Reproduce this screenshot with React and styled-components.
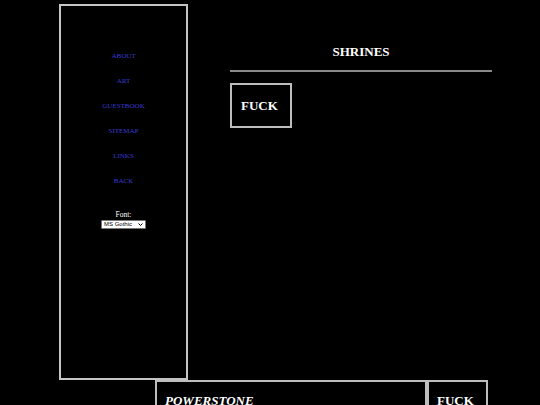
import React from "react";
import styled, { createGlobalStyle } from "styled-components";

const Global = createGlobalStyle`
  html, body { margin: 0; padding: 0; background: #000; overflow: hidden; }
  body { font-family: "Liberation Serif", "Times New Roman", serif; color: #fff; }
`;

const Page = styled.div`
  padding: 4px 0 0 59px;
  width: 540px;
  box-sizing: border-box;
`;

const TopRow = styled.div`
  display: flex;
  align-items: flex-start;
`;

const Sidebar = styled.nav`
  box-sizing: border-box;
  width: 129px;
  height: 376px;
  border: 2px solid #c4c4c4;
  display: flex;
  flex-direction: column;
  align-items: center;
  padding-top: 38px;
`;

const NavLink = styled.a`
  display: block;
  height: 25px;
  line-height: 25px;
  font-size: 7px;
  color: #3a3ad2;
  text-decoration: none;
  text-transform: uppercase;
`;

const FontLabel = styled.div`
  margin-top: 17px;
  font-size: 7.5px;
  line-height: 8px;
  color: #fff;
`;

const SelectWrap = styled.div`
  position: relative;
  width: 45px;
  height: 9px;
  margin-top: 1px;
  line-height: 0;
`;

const FontSelect = styled.select`
  display: block;
  appearance: none;
  -webkit-appearance: none;
  box-sizing: border-box;
  width: 45px;
  height: 9px;
  font-size: 6px;
  line-height: 7px;
  padding: 0 0 0 2px;
  margin: 0;
  border: 1px solid #777;
  border-radius: 1px;
  background: #fff;
  color: #000;
  font-family: "Liberation Sans", Arial, sans-serif;
`;

const Chevron = styled.svg`
  position: absolute;
  right: 3px;
  top: 3px;
  width: 5px;
  height: 3px;
  pointer-events: none;
`;

const Main = styled.main`
  margin-left: 42px;
  width: 262px;
  padding-top: 39px;
`;

const Title = styled.h1`
  margin: 0;
  text-align: center;
  font-size: 13px;
  line-height: 18px;
  font-weight: bold;
`;

const Rule = styled.div`
  margin-top: 9px;
  height: 2px;
  background: #8a8a8a;
`;

const Tile = styled.div`
  box-sizing: border-box;
  margin-top: ${(p) => p.$mt || 0}px;
  width: ${(p) => p.$w}px;
  height: ${(p) => p.$h}px;
  border: 2px solid #bdbdbd;
  display: flex;
  align-items: ${(p) => (p.$top ? "flex-start" : "center")};
  padding: ${(p) => (p.$top ? "11px" : "0")} 0 0 ${(p) => p.$pl}px;
  font-size: 13px;
  font-weight: bold;
  font-style: ${(p) => (p.$italic ? "italic" : "normal")};
  color: #fff;
  white-space: nowrap;
`;

const BottomRow = styled.div`
  display: flex;
  margin-left: 96px;
`;

const links = ["About", "Art", "Guestbook", "Sitemap", "Links", "Back"];

export default function App() {
  return (
    <>
      <Global />
      <Page>
        <TopRow>
          <Sidebar>
            {links.map((l) => (
              <NavLink key={l} href="#">
                {l}
              </NavLink>
            ))}
            <FontLabel>Font:</FontLabel>
            <SelectWrap>
              <FontSelect defaultValue="MS Gothic">
                <option>MS Gothic</option>
                <option>Times New Roman</option>
              </FontSelect>
              <Chevron viewBox="0 0 5 3">
                <path d="M0.5 0.5 L2.5 2.5 L4.5 0.5" fill="none" stroke="#000" strokeWidth="1" />
              </Chevron>
            </SelectWrap>
          </Sidebar>
          <Main>
            <Title>SHRINES</Title>
            <Rule />
            <Tile $mt={11} $w={62} $h={45} $pl={9}>
              FUCK
            </Tile>
          </Main>
        </TopRow>
        <BottomRow>
          <Tile $w={272} $h={60} $pl={8} $italic $top>
            POWERSTONE
          </Tile>
          <Tile $w={61} $h={60} $pl={8} $top>
            FUCK
          </Tile>
        </BottomRow>
      </Page>
    </>
  );
}
